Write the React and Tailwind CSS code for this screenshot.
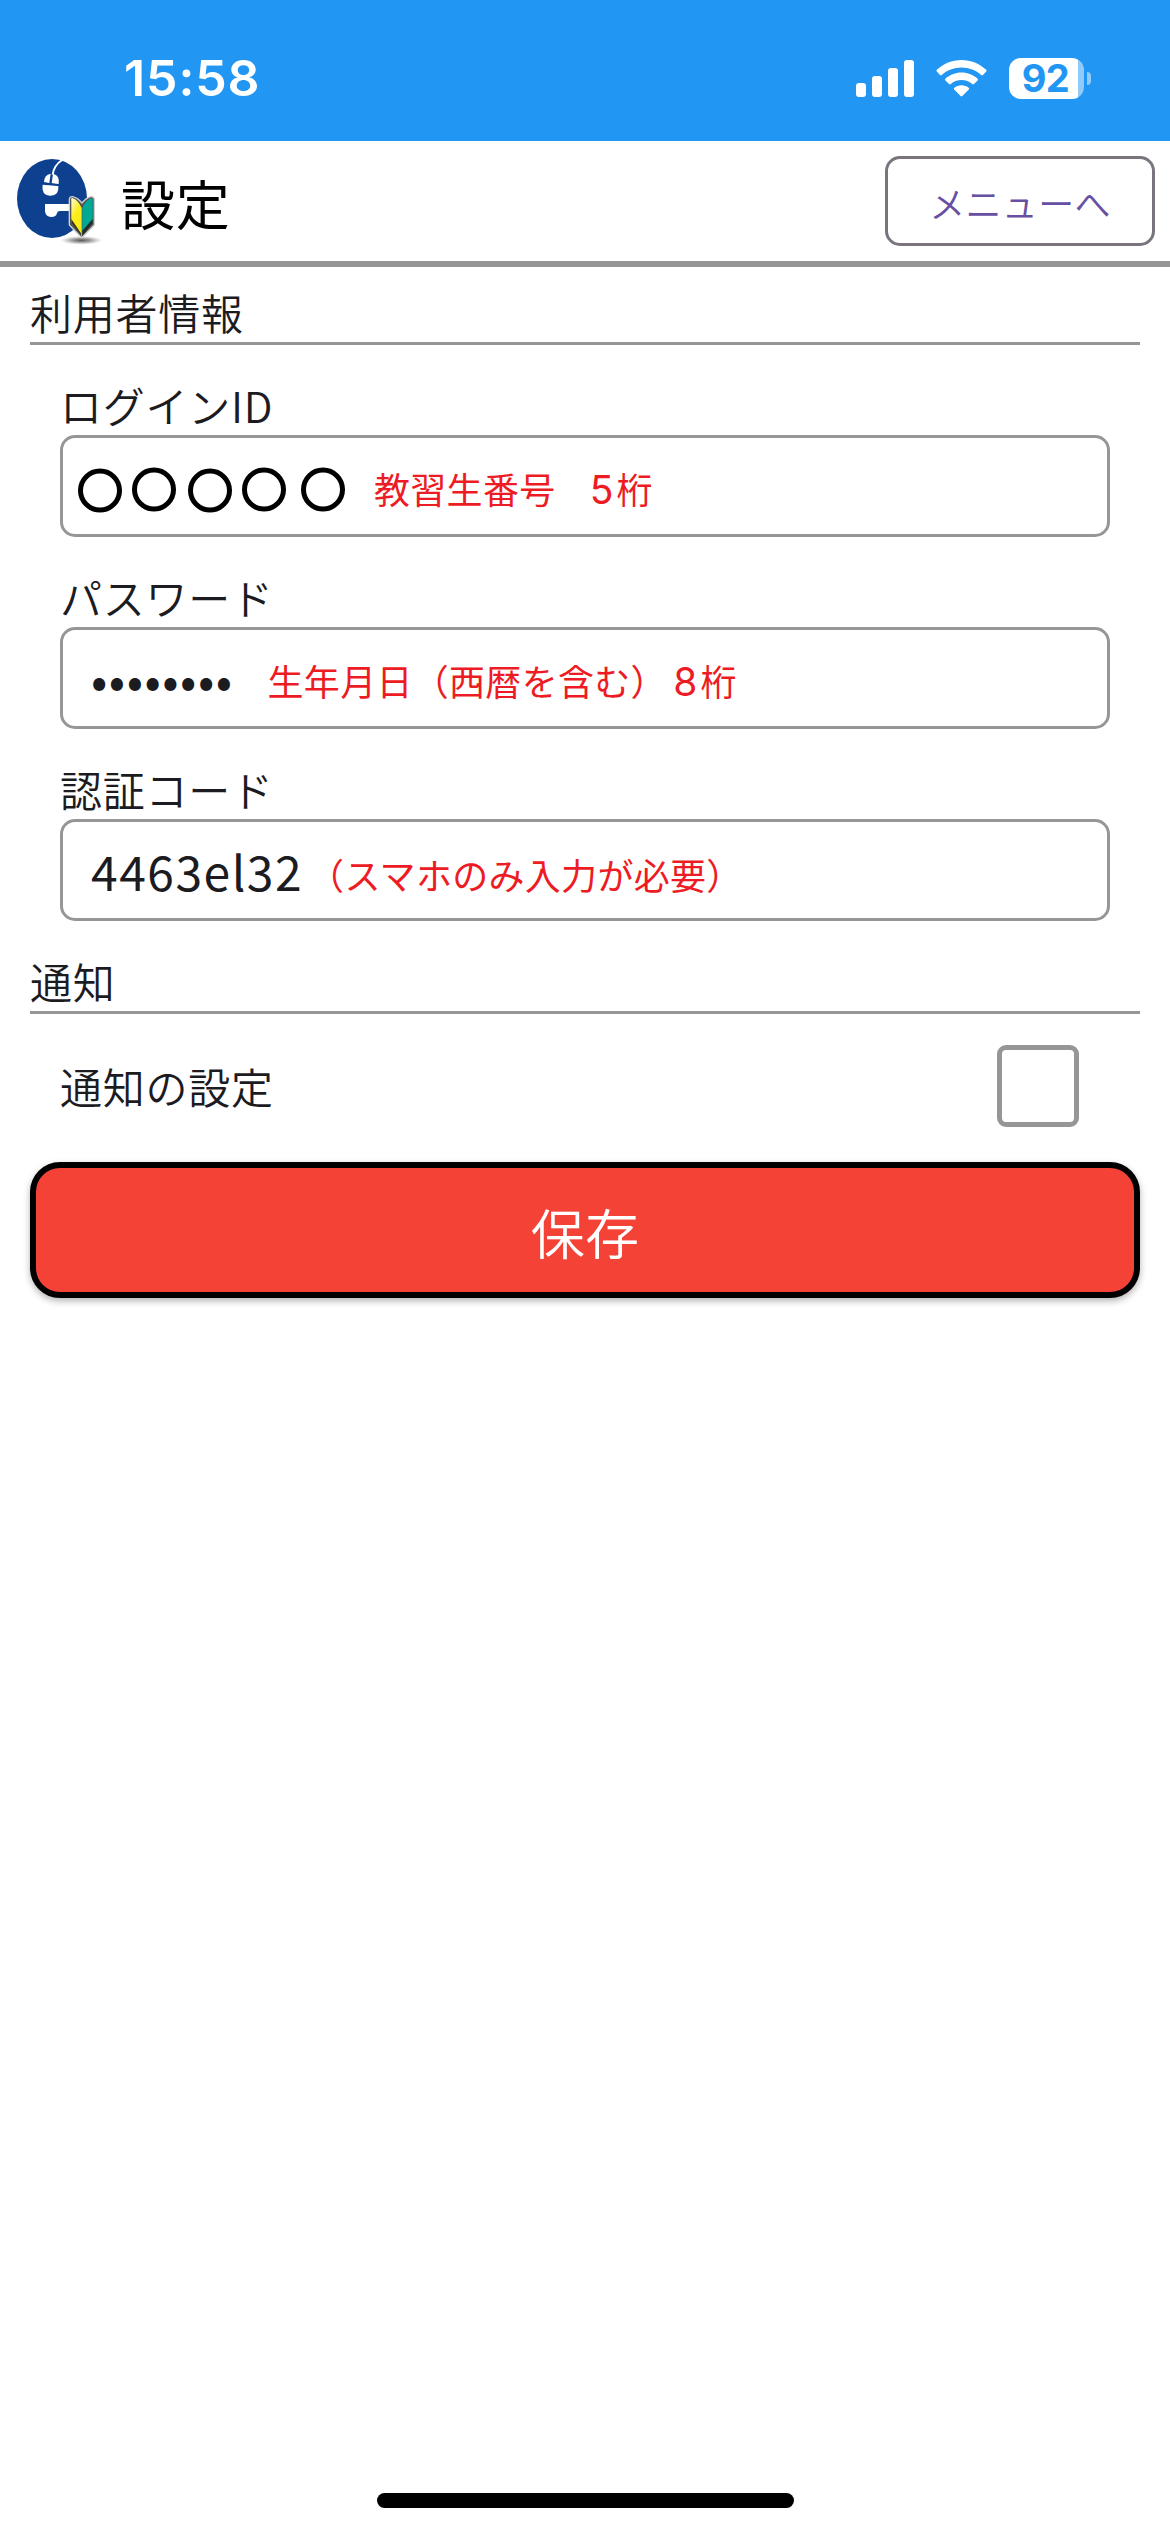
import React, { useState } from 'react';

function StatusBar() {
  return (
    <div className="flex h-[141px] items-center justify-between bg-[#2196f3] pl-[124px] pr-[79px] pt-[15px] text-white">
      <span className="font-[Inter,sans-serif] text-[50px] font-semibold leading-none tracking-[0.9px]">15:58</span>

      <div className="flex items-center">
        <svg width="58" height="37" viewBox="0 0 58 37" fill="currentColor">
          <rect x="0" y="23" width="10" height="14" rx="3" />
          <rect x="16" y="16" width="10" height="21" rx="3" />
          <rect x="32" y="8" width="10" height="29" rx="3" />
          <rect x="48" y="0" width="10" height="37" rx="3" />
        </svg>

        <svg className="ml-[22px]" width="51" height="37" viewBox="0 0 51 37" fill="currentColor">
          <path d="M25.5 0C16 0 7.300 3.700 0.800 9.800Q0 10.700 0.800 11.600L4 14.900Q4.900 15.700 5.800 14.900C11 10.200 18 7.400 25.500 7.400S40 10.200 45.200 14.900Q46.100 15.700 47 14.900L50.200 11.600Q51 10.700 50.200 9.800C43.700 3.700 35 0 25.500 0Z" />
          <path d="M25.500 12.500C19.300 12.500 13.700 14.900 9.400 18.700Q8.600 19.600 9.400 20.500L13 24Q13.900 24.800 14.800 24C17.600 21.500 21.400 20 25.500 20S33.400 21.500 36.200 24Q37.100 24.800 38 24L41.600 20.500Q42.400 19.600 41.600 18.700C37.300 14.900 31.700 12.500 25.500 12.500Z" />
          <path d="M25.500 25.300C22.700 25.300 20.100 26.200 18.100 27.900Q17.500 28.700 18.200 29.500L24.600 36.100Q25.500 37 26.400 36.100L32.800 29.500Q33.500 28.700 32.900 27.900C30.900 26.200 28.300 25.300 25.500 25.300Z" />
        </svg>

        <div className="ml-[22px] flex items-center gap-[3px]">
          <div className="flex h-[41px] w-[75px] items-center justify-center rounded-[12px] bg-linear-to-r from-white from-92% to-white/50 to-92% pr-[2px]">
            <span className="font-[Inter,sans-serif] text-[38px] font-bold leading-[41px] tracking-[-0.5px] text-[#2196f3]">92</span>
          </div>
          <div className="h-[13px] w-[4px] rounded-r-full bg-white/50" />
        </div>
      </div>
    </div>
  );
}

function Logo() {
  return (
    <svg className="mt-[2px] shrink-0" width="88" height="88" viewBox="48 54 264 264">
      <defs>
        <radialGradient id="shadow">
          <stop offset="0" stopColor="#555" />
          <stop offset="0.45" stopColor="#888" stopOpacity="0.8" />
          <stop offset="1" stopColor="#aaa" stopOpacity="0" />
        </radialGradient>
        <linearGradient id="yellow" x1="0" y1="0" x2="0.5" y2="1">
          <stop offset="0" stopColor="#fffde0" />
          <stop offset="0.5" stopColor="#fbee1c" />
          <stop offset="1" stopColor="#f5ea14" />
        </linearGradient>
      </defs>
      <ellipse cx="156" cy="175.500" rx="105" ry="118.500" fill="#0d418f" />
      <path d="M186 60Q162 76 158 104" fill="none" stroke="#fff" strokeWidth="6" />
      {/* mouse */}
      <path d="M152 101L148 129L132 127Q132 104 152 101Z" fill="#fff" />
      <path d="M159 101Q180 105 176 132L155 130Z" fill="#fff" />
      <path d="M128 134L175 138Q178 168 150 167Q123 165 128 134Z" fill="#fff" />
      <path d="M122 128L188 137" stroke="#0d418f" strokeWidth="4" />
      {/* bar of the "e" */}
      <path d="M135 192H218V213H180Q172 213 171 219Q169 231 154 231Q135 230 135 212Z" fill="#fff" />
      <ellipse cx="244" cy="301" rx="63" ry="13" fill="url(#shadow)" />
      {/* beginner mark */}
      <path
        d="M218 170Q208 169 208 180V255L245 293L283 255V180Q283 169 272 170Q258 174 246 189Q234 174 218 170Z"
        fill="#555"
        stroke="#d0d0d0"
        strokeWidth="4"
        strokeLinejoin="round"
      />
      <path d="M217 174Q212 174 214 183V250L245 288V204Q234 179 217 174Z" fill="url(#yellow)" />
      <path d="M275 174Q279 175 278 183V250L247 283V204Q258 179 275 174Z" fill="#00a896" />
      <path d="M278 237V250L247 287V272Z" fill="#252c2a" />
      <path d="M214 237V250L243 287V280Z" fill="#333" />
    </svg>
  );
}

function Header() {
  return (
    <header className="flex h-[126px] items-center justify-between border-b-[6px] border-[#969696] pl-[16px] pr-[15px]">
      <div className="flex items-center">
        <Logo />
        <h1 className="ml-[17px] pt-[3px] text-[54px] font-normal leading-[60px] text-black">設定</h1>
      </div>
      <button className="h-[90px] w-[270px] rounded-[15px] border-[3px] border-[#79747e] pt-[2px] text-[36px] leading-none tracking-[0.3px] text-[#6750a4]">
        メニューへ
      </button>
    </header>
  );
}

function SectionTitle({ children }) {
  return <h2 className="h-[63px] border-b-[3px] border-[#969696] leading-[60px]">{children}</h2>;
}

function Field({ label, children }) {
  return (
    <div className="mx-[30px] mt-[30px]">
      <div className="h-[60px] leading-[60px]">{label}</div>
      <div className="flex h-[102px] items-center rounded-[15px] border-[3px] border-[#969696]">{children}</div>
    </div>
  );
}

function Hint({ className, children }) {
  return <span className={`whitespace-pre text-[36px] font-normal leading-none tracking-[0.3px] text-[#ed1c24] ${className}`}>{children}</span>;
}

function WideDigit({ children }) {
  return <span className="-ml-[2px] font-[Inter,sans-serif] text-[39px] font-normal leading-none tracking-[3px]">{children}</span>;
}

export default function App() {
  const [notify, setNotify] = useState(false);

  return (
    <div className="flex h-[2532px] w-[1170px] flex-col bg-white font-['Noto_Sans_CJK_JP',sans-serif] text-[42px] font-[350] tracking-[0.75px] text-[#1c1b1f]">
      <StatusBar />
      <Header />

      <main className="flex-1 px-[30px] pt-[15px]">
        <SectionTitle>利用者情報</SectionTitle>

        <Field label="ログインID">
          <svg className="ml-[15px]" width="270" height="56" viewBox="78 458 270 56" fill="none" stroke="#000" strokeWidth="5">
            <circle cx="100" cy="490.500" r="19.500" />
            <circle cx="154" cy="489.500" r="19.500" />
            <circle cx="210" cy="490.500" r="19.500" />
            <circle cx="264" cy="489.500" r="19.500" />
            <circle cx="323" cy="489.500" r="19.500" />
          </svg>
          <Hint className="ml-[26px] pt-[6px]">
            教習生番号　<WideDigit>5</WideDigit>桁
          </Hint>
        </Field>

        <Field label="パスワード">
          <span className="ml-[28px] text-[48px] font-normal leading-none tracking-[1.5px]">••••••••</span>
          <Hint className="ml-[34px] pt-[6px]">
            生年月日（西暦を含む） <WideDigit>8</WideDigit>桁
          </Hint>
        </Field>

        <Field label="認証コード">
          <span className="ml-[28px] text-[48px] font-normal leading-none tracking-[1.5px]">4463el32</span>
          <Hint className="ml-[5px] pt-[8px]">（スマホのみ入力が必要）</Hint>
        </Field>

        <div className="mt-[30px]">
          <SectionTitle>通知</SectionTitle>
        </div>

        <div className="flex h-[144px] items-center justify-between pl-[30px] pr-[61px]">
          <span className="leading-[60px]">通知の設定</span>
          <button
            role="checkbox"
            aria-checked={notify}
            aria-label="通知の設定"
            onClick={() => setNotify(!notify)}
            className={`size-[82px] rounded-[9px] border-[5px] border-[#969696] ${notify ? 'bg-[#969696]' : ''}`}
          />
        </div>

        <button className="mt-[4px] block h-[136px] w-full rounded-[30px] border-[6px] border-black bg-[#f44336] pt-[4px] text-[54px] leading-none tracking-[0.3px] text-white shadow-[0_3px_7px_rgba(0,0,0,0.3)]">
          保存
        </button>
      </main>

      <div className="mx-auto mb-[24px] h-[15px] w-[417px] rounded-full bg-black" />
    </div>
  );
}
